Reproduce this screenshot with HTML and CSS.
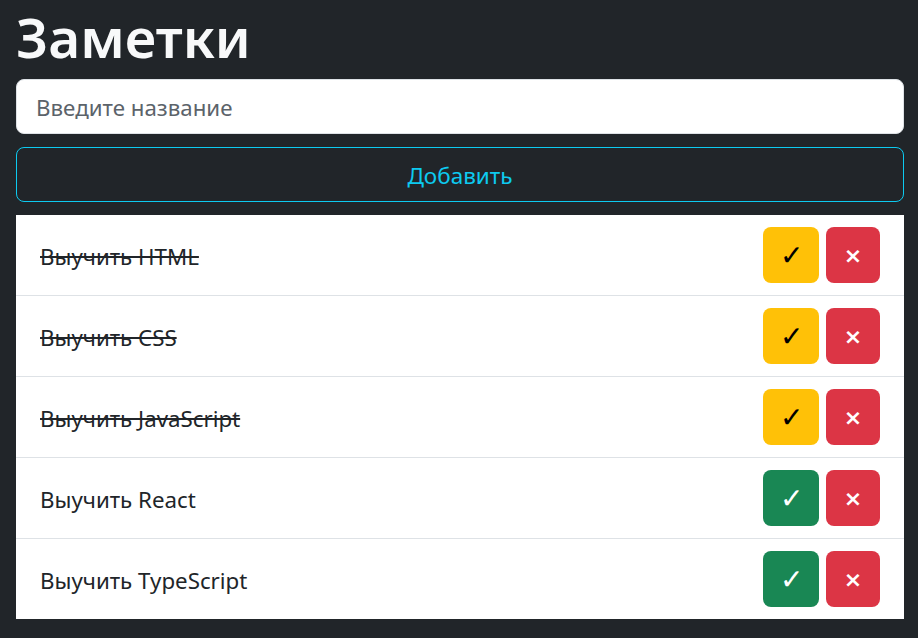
FILE: index.html
```html
<!DOCTYPE html>
<html lang="ru">
<head>
<meta charset="utf-8">
<title>Заметки</title>
<link rel="stylesheet" href="styles.css">
</head>
<body>
<div class="app">
  <h1 class="title">Заметки</h1>
  <input class="field" type="text" placeholder="Введите название">
  <button class="add">Добавить</button>
  <ul class="list">
    <li class="item"><span class="text done">Выучить HTML</span><div class="actions"><button class="btn warn">✓</button><button class="btn del">×</button></div></li>
    <li class="item"><span class="text done">Выучить CSS</span><div class="actions"><button class="btn warn">✓</button><button class="btn del">×</button></div></li>
    <li class="item"><span class="text done">Выучить JavaScript</span><div class="actions"><button class="btn warn">✓</button><button class="btn del">×</button></div></li>
    <li class="item"><span class="text">Выучить React</span><div class="actions"><button class="btn ok">✓</button><button class="btn del">×</button></div></li>
    <li class="item"><span class="text">Выучить TypeScript</span><div class="actions"><button class="btn ok">✓</button><button class="btn del">×</button></div></li>
  </ul>
</div>
</body>
</html>
```
FILE: styles.css
```css
* { box-sizing: border-box; }
html, body { margin: 0; padding: 0; }
body {
  background: #212529;
  font-family: "Noto Sans", "Open Sans", sans-serif;
  color: #212529;
}
.app {
  padding: 0 14px 0 16px;
  display: flex;
  flex-direction: column;
}
.title {
  margin: 0;
  height: 79px;
  font-size: 55px;
  font-weight: 600;
  line-height: 74px;
  color: #f8f9fa;
}
.field {
  height: 55px;
  border: 1px solid #dee2e6;
  border-radius: 8px;
  padding: 2px 19px 0;
  font-family: inherit;
  font-size: 22.3px;
  color: #212529;
  background: #fff;
  outline: none;
}
.field::placeholder { color: #5c636a; }
.add {
  margin-top: 13px;
  height: 55px;
  border: 1px solid #0dcaf0;
  border-radius: 8px;
  background: transparent;
  color: #0dcaf0;
  font-family: inherit;
  font-size: 22.5px;
  padding: 2px 0 0;
}
.list {
  margin: 13px 0 0;
  padding: 0;
  list-style: none;
  background: #fff;
}
.item {
  height: 81px;
  display: flex;
  align-items: center;
  justify-content: space-between;
  padding: 0 24px;
  border-top: 1px solid #dee2e6;
}
.item:first-child { border-top: none; height: 80px; }
.text {
  font-size: 22.3px;
  color: #212529;
  padding-top: 3px;
}
.text.done { text-decoration: line-through; }
.actions {
  display: flex;
  gap: 7px;
}
.btn {
  width: 56px;
  height: 56px;
  border: none;
  border-radius: 8px;
  font-family: "DejaVu Sans", sans-serif;
  font-size: 28px;
  font-weight: 300;
  padding: 0;
}
.btn.warn { background: #ffc107; color: #000; }
.btn.ok { background: #198754; color: #fff; }
.btn.del { width: 54px; background: #dc3545; color: #fff; font-size: 22px; font-weight: bold; }
```
